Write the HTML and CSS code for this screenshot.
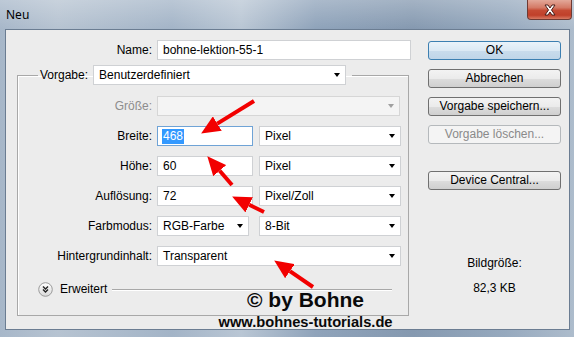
FILE: index.html
```html
<!DOCTYPE html>
<html lang="de">

<head>
  <meta charset="UTF-8">
  <title>Neu</title>
  <link rel="stylesheet" href="styles.css">
</head>

<body>
  <div class="window">
    <div class="titlebar">
      <span class="title">Neu</span>
      <div class="close">
        <svg width="14" height="12" viewBox="0 0 14 12">
          <path d="M2 1 L5 1 L7 4 L9 1 L12 1 L8.5 6 L12 11 L9 11 L7 8 L5 11 L2 11 L5.5 6 Z" fill="#fff" stroke="#4a1f1a" stroke-width="1"/>
        </svg>
      </div>
    </div>

    <div class="client">
      <div class="form">
        <div class="row">
          <span class="lbl lbl-top">Name:</span>
          <div class="field w-name">bohne-lektion-55-1</div>
        </div>

        <fieldset class="group">
          <legend class="preset">
            <span>Vorgabe:</span>
            <div class="select w-preset"><span>Benutzerdefiniert</span><i class="arrow"></i></div>
          </legend>

          <div class="rows">
            <div class="row">
              <span class="lbl off">Größe:</span>
              <div class="select off w-size"><span></span><i class="arrow"></i></div>
            </div>
            <div class="row">
              <span class="lbl">Breite:</span>
              <div class="field focus w-num"><span class="sel">468</span></div>
              <div class="select w-unit"><span>Pixel</span><i class="arrow"></i></div>
            </div>
            <div class="row">
              <span class="lbl">Höhe:</span>
              <div class="field w-num">60</div>
              <div class="select w-unit"><span>Pixel</span><i class="arrow"></i></div>
            </div>
            <div class="row">
              <span class="lbl">Auflösung:</span>
              <div class="field w-num">72</div>
              <div class="select w-unit"><span>Pixel/Zoll</span><i class="arrow"></i></div>
            </div>
            <div class="row">
              <span class="lbl">Farbmodus:</span>
              <div class="select w-mode"><span>RGB-Farbe</span><i class="arrow"></i></div>
              <div class="select w-bits"><span>8-Bit</span><i class="arrow"></i></div>
            </div>
            <div class="row">
              <span class="lbl">Hintergrundinhalt:</span>
              <div class="select w-bg"><span>Transparent</span><i class="arrow"></i></div>
            </div>
          </div>

          <div class="extra">
            <svg class="chevron" width="15" height="15" viewBox="0 0 15 15">
              <defs>
                <linearGradient id="knob" x1="0" y1="0" x2="0" y2="1">
                  <stop offset="0" stop-color="#ffffff"/>
                  <stop offset="1" stop-color="#d9d9d9"/>
                </linearGradient>
              </defs>
              <circle cx="7.5" cy="7.5" r="6.8" fill="url(#knob)" stroke="#9a9a9a"/>
              <path d="M5 4.5 L7.5 7 L10 4.5 M5 7.5 L7.5 10 L10 7.5" fill="none" stroke="#222" stroke-width="1.4"/>
            </svg>
            <span>Erweitert</span>
            <span class="rule"></span>
          </div>
        </fieldset>
      </div>

      <div class="side">
        <div class="btn default">OK</div>
        <div class="btn">Abbrechen</div>
        <div class="btn">Vorgabe speichern...</div>
        <div class="btn off">Vorgabe löschen...</div>
        <div class="btn device">Device Central...</div>
        <div class="info">
          <p>Bildgröße:</p>
          <p>82,3 KB</p>
        </div>
      </div>
    </div>

    <div class="stamp">
      <div class="stamp-name">© by Bohne</div>
      <div class="stamp-url">www.bohnes-tutorials.de</div>
    </div>

    <svg class="arrows" width="574" height="337" viewBox="0 0 574 337">
      <defs>
        <marker id="head" markerUnits="userSpaceOnUse" markerWidth="19" markerHeight="17" viewBox="0 0 19 17" refX="0" refY="8.5" orient="auto">
          <path d="M0 0 L19 8.5 L0 17 Z" fill="#f20000"/>
        </marker>
      </defs>
      <g stroke="#f20000" stroke-width="4" marker-end="url(#head)">
        <line x1="254" y1="101" x2="217.3" y2="123.6"/>
        <line x1="232" y1="185" x2="219.7" y2="170.7"/>
        <line x1="264" y1="212" x2="249.2" y2="204.8"/>
        <line x1="313" y1="287" x2="289.9" y2="271.2"/>
      </g>
    </svg>
  </div>
</body>

</html>
```

FILE: styles.css
```css
/* Dialog "Neu" im Stil von Windows 7 */
body {
  margin: 0;
  font-family: "Liberation Sans", Arial, sans-serif;
  font-size: 12px;
  color: #000;
  background: #fff;
}

.window {
  position: relative;
  width: 574px;
  height: 337px;
  overflow: hidden;
  background: linear-gradient(90deg, #a7b7c9 0%, #b6c3d1 10%, #a3b4c7 30%, #b9c6d4 42%, #8fa3ba 55%, #8599b0 72%, #96a9be 88%, #adbccc 100%);
}

.titlebar {
  display: flex;
  justify-content: space-between;
  align-items: flex-start;
  height: 29px;
  background: linear-gradient(180deg, rgba(255, 255, 255, 0.25), rgba(255, 255, 255, 0));
}

.title {
  font-family: "Noto Sans", sans-serif;
  font-size: 12px;
  line-height: 16px;
  padding: 7px 0 0 6px;
  color: #000;
}

.close {
  display: flex;
  justify-content: center;
  align-items: center;
  width: 45px;
  height: 20px;
  margin-right: 2px;
  box-sizing: border-box;
  border: 1px solid #6e3a33;
  border-top: none;
  border-radius: 0 0 4px 4px;
  background: linear-gradient(180deg, #e3a899 0%, #d47a66 40%, #c54a33 55%, #c0402a 80%, #d87a63 100%);
}

.client {
  display: flex;
  margin-left: 5px;
  width: 565px;
  height: 301px;
  box-sizing: border-box;
  border: 1px solid #6b7d92;
  background: #ececec;
}

.form {
  width: 412px;
  box-sizing: border-box;
  padding: 10px 0 0 11px;
}

.row {
  display: flex;
  align-items: center;
  height: 20px;
}

.lbl {
  width: 134px;
  margin-right: 5px;
  text-align: right;
  white-space: nowrap;
}

.lbl-top {
  width: 135px;
}

.lbl.off {
  color: #8d8d8d;
}

.field,
.select {
  display: flex;
  align-items: center;
  height: 20px;
  box-sizing: border-box;
  border: 1px solid #cfd1d4;
  background: #fff;
  padding: 0 5px;
  white-space: nowrap;
}

.field.focus {
  border-color: #6fa3d6;
}

.sel {
  background: #3399ff;
  color: #fff;
  padding: 0 1px;
  margin-left: -1px;
  line-height: 15px;
}

.select {
  justify-content: space-between;
}

.select.off {
  background: #f4f4f4;
  border-color: #d6d6d6;
}

.arrow {
  width: 0;
  height: 0;
  border-left: 3.5px solid transparent;
  border-right: 3.5px solid transparent;
  border-top: 4px solid #000;
}

.select.off .arrow {
  border-top-color: #a0a0a0;
}

.w-name { width: 254px; }
.w-preset { width: 253px; }
.w-size { width: 243px; }
.w-num { width: 96px; margin-right: 6px; }
.w-unit { width: 142px; }
.w-mode { width: 92px; margin-right: 10px; }
.w-bits { width: 142px; }
.w-bg { width: 244px; }

.group {
  width: 392px;
  box-sizing: border-box;
  margin: 5px 0 0;
  padding: 0 0 18px;
  min-inline-size: auto;
  border: 1px solid #a8a8a8;
  box-shadow: inset 1px 1px 0 #fff;
}

.preset {
  display: flex;
  align-items: center;
  gap: 5px;
  margin-left: 20px;
  padding: 0 6px 0 2px;
}

.rows {
  display: flex;
  flex-direction: column;
  gap: 10px;
  margin-top: 11px;
}

.extra {
  display: flex;
  align-items: center;
  height: 16px;
  margin-top: 15px;
  padding-left: 20px;
}

.chevron {
  margin-right: 7px;
}

.rule {
  flex: 1;
  height: 1px;
  margin: 0 16px 0 5px;
  background: #a8a8a8;
  box-shadow: 0 1px 0 #fff;
}

.side {
  display: flex;
  flex-direction: column;
  width: 133px;
  margin-left: 10px;
  padding-top: 11px;
}

.btn {
  height: 19px;
  box-sizing: border-box;
  border: 1px solid #707070;
  border-radius: 3px;
  background: linear-gradient(180deg, #f3f3f3 0%, #ebebeb 50%, #dddddd 51%, #cfcfcf 100%);
  text-align: center;
  line-height: 17px;
  white-space: nowrap;
}

.btn + .btn {
  margin-top: 9px;
}

.btn.default {
  border-color: #3c7fb1;
  background: linear-gradient(180deg, #eaf3fa 0%, #dbe9f4 50%, #c9dcec 51%, #bfd5e8 100%);
}

.btn.off {
  border-color: #b5b9bc;
  background: #f4f4f4;
  color: #8a8a8a;
}

.btn.device {
  margin-top: 27px;
}

.info {
  margin-top: 65px;
  text-align: center;
}

.info p {
  margin: 0;
  line-height: 16px;
}

.info p + p {
  margin-top: 9px;
}

.stamp {
  position: absolute;
  left: 205px;
  top: 288px;
  width: 201px;
  text-align: center;
  font-family: "Liberation Sans", Arial, sans-serif;
  font-weight: bold;
  color: #0a0a0a;
}

.stamp-name {
  font-size: 21px;
  line-height: 24px;
}

.stamp-url {
  font-size: 14.7px;
  line-height: 18px;
  margin-top: 1px;
}

.arrows {
  position: absolute;
  left: 0;
  top: 0;
  pointer-events: none;
}
```
